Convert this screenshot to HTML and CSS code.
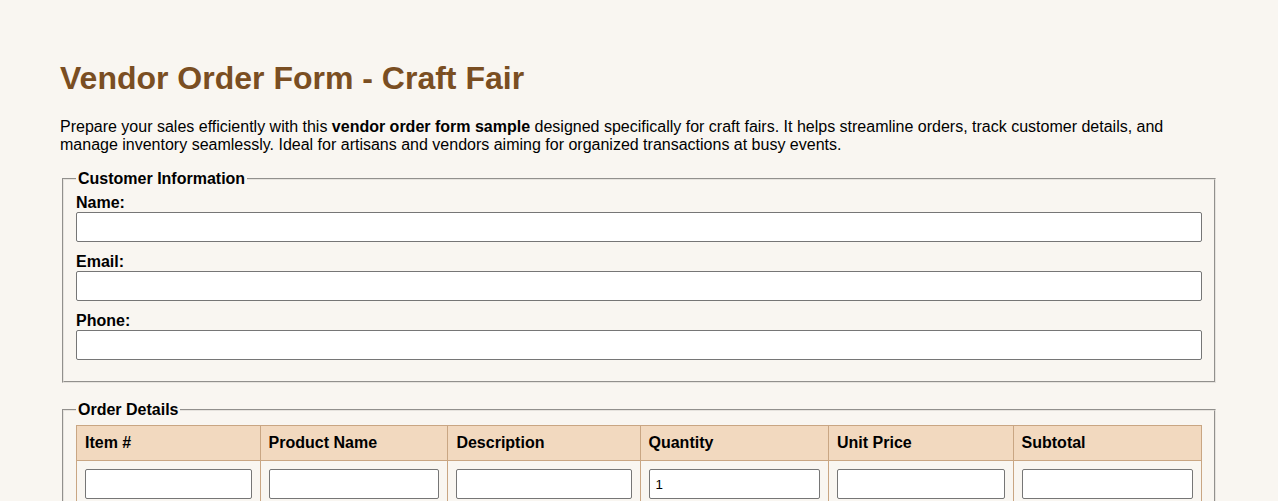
FILE: index.html
```html
<!DOCTYPE html>
<html lang="en">
<head>
<meta charset="utf-8">
<title>Vendor Order Form - Craft Fair</title>
<link rel="stylesheet" href="styles.css">
</head>
<body>
<main class="page">
  <h1 class="title">Vendor Order Form - Craft Fair</h1>
  <p class="intro">Prepare your sales efficiently with this <strong>vendor order form sample</strong> designed specifically for craft fairs. It helps streamline orders, track customer details, and manage inventory seamlessly. Ideal for artisans and vendors aiming for organized transactions at busy events.</p>
  <form class="order-form">
    <fieldset class="group">
      <legend class="group-title">Customer Information</legend>
      <label class="field-label" for="name">Name:</label>
      <input class="field-input" type="text" id="name">
      <label class="field-label" for="email">Email:</label>
      <input class="field-input" type="email" id="email">
      <label class="field-label" for="phone">Phone:</label>
      <input class="field-input" type="tel" id="phone">
    </fieldset>
    <fieldset class="group">
      <legend class="group-title">Order Details</legend>
      <table class="order-table">
        <thead>
          <tr>
            <th class="col-item">Item #</th>
            <th class="col-name">Product Name</th>
            <th class="col-desc">Description</th>
            <th class="col-qty">Quantity</th>
            <th class="col-price">Unit Price</th>
            <th class="col-sub">Subtotal</th>
          </tr>
        </thead>
        <tbody>
          <tr>
            <td><input class="cell-input" type="text"></td>
            <td><input class="cell-input" type="text"></td>
            <td><input class="cell-input" type="text"></td>
            <td><input class="cell-input" type="text" value="1"></td>
            <td><input class="cell-input" type="text"></td>
            <td><input class="cell-input" type="text"></td>
          </tr>
          <tr>
            <td><input class="cell-input" type="text"></td>
            <td><input class="cell-input" type="text"></td>
            <td><input class="cell-input" type="text"></td>
            <td><input class="cell-input" type="text" value="1"></td>
            <td><input class="cell-input" type="text"></td>
            <td><input class="cell-input" type="text"></td>
          </tr>
        </tbody>
      </table>
    </fieldset>
  </form>
</main>
</body>
</html>
```
FILE: styles.css
```css
html, body {
  background: #f9f6f1;
}

body {
  margin: 0;
  font-family: "Liberation Sans", Arial, sans-serif;
  font-size: 16px;
  color: #000;
}

.page {
  padding: 39px 60px 40px;
}

.title {
  font-size: 32px;
  font-weight: bold;
  color: #7a4e22;
  margin: 21px 0;
}

.intro {
  margin: 16px 0;
}

.order-form {
  margin: 0;
}

.group {
  margin: 0 2px 18px;
  padding: 0.35em 12px 10px;
  border: 2px groove #e6e3de;
}

.group-title {
  font-weight: bold;
  padding: 0 2px;
}

.field-label {
  display: block;
  font-weight: bold;
  margin-bottom: 0;
}

.field-input,
.cell-input {
  display: block;
  width: 100%;
  height: 30px;
  box-sizing: border-box;
  padding: 6px;
  margin: 0;
  font-family: "Liberation Sans", Arial, sans-serif;
  font-size: 13.33px;
  border: 1px solid #767676;
  border-radius: 2px;
  background: #fff;
  color: #000;
}

.field-input {
  margin-bottom: 11px;
}

.order-table {
  width: 100%;
  border-collapse: collapse;
  margin-top: 1px;
}

.order-table th,
.order-table td {
  border: 1px solid #c9a683;
  padding: 8px;
  text-align: left;
}

.order-table th {
  background: #f2d9bf;
  font-weight: bold;
}
```
